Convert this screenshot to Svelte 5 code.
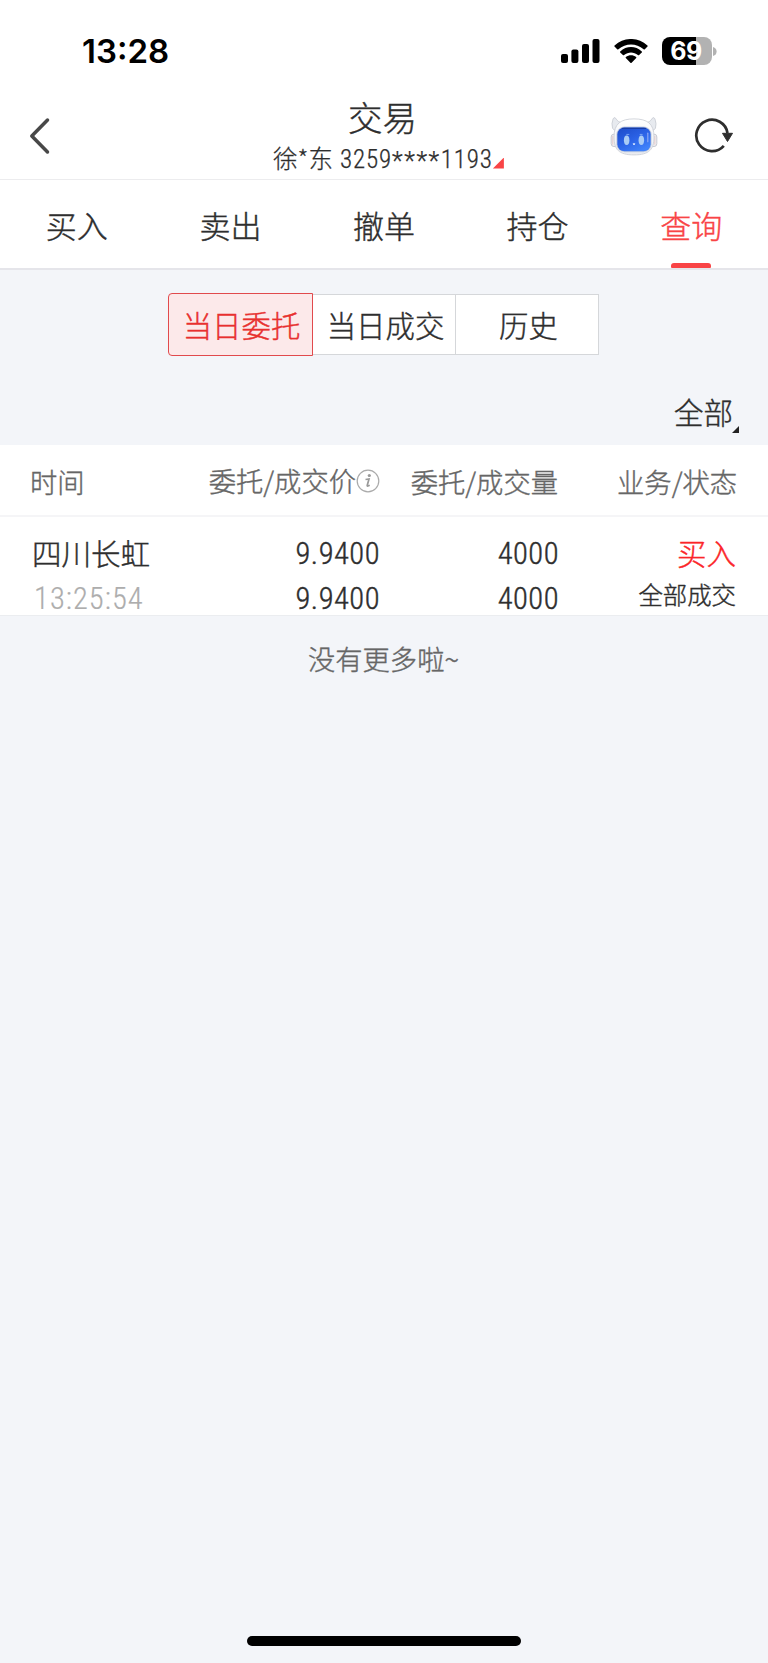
<script>
  const tabs = ['买入', '卖出', '撤单', '持仓', '查询'];
  const segments = ['当日委托', '当日成交', '历史'];
  let tab = $state(4);
  let segment = $state(0);
  const orders = [
    { name: '四川长虹', time: '13:25:54', price: '9.9400', filledPrice: '9.9400', qty: '4000', filledQty: '4000', side: '买入', status: '全部成交' }
  ];
</script>

<div class="screen">
  <div class="status-bar">
    <span class="clock">13:28</span>
    <div class="indicators">
      <svg class="signal" width="39" height="25" viewBox="0 0 39 25">
        <rect x="0" y="15" width="7" height="9" rx="2" />
        <rect x="10.4" y="10.4" width="7" height="13.6" rx="2" />
        <rect x="21" y="5" width="7" height="19" rx="2" />
        <rect x="31.5" y="0" width="7" height="24" rx="2" />
      </svg>
      <svg class="wifi" width="34" height="25" viewBox="0 0 34 25">
        <path d="M.5 7.6Q0 7 .6 6.5C10-2.2 24-2.2 33.400 6.500Q34 7 33.500 7.600L30.800 10.300Q30.200 10.800 29.600 10.300C22.300 3.900 11.700 3.900 4.400 10.300Q3.800 10.800 3.200 10.300Z" />
        <path d="M6.200 13.400Q5.700 12.900 6.200 12.400C12.400 6.600 21.600 6.600 27.800 12.400Q28.300 12.900 27.800 13.400L25.100 16.100Q24.500 16.600 23.900 16.100C19.800 12.700 14.200 12.700 10.100 16.100Q9.500 16.600 8.900 16.100Z" />
        <path d="M11.800 19Q11.300 18.500 11.900 18C14.800 15.700 19.200 15.700 22.100 18Q22.700 18.500 22.200 19L17.600 23.700Q17 24.200 16.400 23.700Z" />
      </svg>
      <div class="battery"><span>69</span></div>
      <svg class="nub" width="4" height="9" viewBox="0 0 4 9"><path d="M0 0Q3.600 1 3.600 4.500T0 9Z" /></svg>
    </div>
  </div>

  <header>
    <svg class="back" width="22" height="38" viewBox="0 0 22 38"><path d="M18.500 3L2.800 19L18.500 35" /></svg>
    <div class="heading">
      <h1>交易</h1>
      <div class="account"><span>徐*东</span><span class="num">3259<b>****</b>1193</span><i></i></div>
    </div>
    <div class="actions">
      <svg class="robot" width="48" height="40" viewBox="0 0 50 42">
        <defs>
          <linearGradient id="face" x1="0" y1="0" x2="0.700" y2="1">
            <stop offset="0" stop-color="#1d4bc8" /><stop offset="0.550" stop-color="#2b62e6" /><stop offset="1" stop-color="#3f82fa" />
          </linearGradient>
          <linearGradient id="shell" x1="0" y1="0" x2="0" y2="1">
            <stop offset="0" stop-color="#ffffff" /><stop offset="1" stop-color="#e9ebf0" />
          </linearGradient>
        </defs>
        <path d="M3 2Q1 7 2.500 12L7 16L14 6Q8 6 6 1.500Q4-.5 3 2ZM47 2Q49 7 47.500 12L43 16L36 6Q42 6 44 1.500Q46-.5 47 2Z" fill="#e7eaef" stroke="#c4c8d0" stroke-width=".8" />
        <rect x="1" y="18" width="8" height="13" rx="3" fill="#f0f0f3" stroke="#c0c2ca" stroke-width=".9" />
        <rect x="41" y="18" width="8" height="13" rx="3" fill="#f0f0f3" stroke="#c0c2ca" stroke-width=".9" />
        <path d="M2.700 20V29M46.900 20V29" stroke="#e5c8c8" stroke-width="1" />
        <path d="M25 2C39 2 46 7 46 21C46 34 41 39.800 25 39.800S4 34 4 21C4 7 11 2 25 2Z" fill="url(#shell)" stroke="#cccfd6" stroke-width=".9" />
        <rect x="6.500" y="10" width="37" height="27" rx="8.500" fill="#c6cede" />
        <rect x="7.500" y="11" width="35" height="25" rx="7.500" fill="url(#face)" />
        <path d="M13 12H37" stroke="#173ca5" stroke-width="1.200" stroke-linecap="round" />
        <path d="M39.500 17V26" stroke="#90a8f2" stroke-width="1.200" stroke-linecap="round" />
        <ellipse cx="17.300" cy="24.500" rx="2.900" ry="5" fill="#a9cbf5" />
        <ellipse cx="32.700" cy="24.500" rx="2.900" ry="5" fill="#a9cbf5" />
        <path d="M17 18.300H20M31 18.300H34" stroke="#7ba5f2" stroke-width="1" />
        <path d="M24.200 28H25.800L25 29.400Z" fill="#d6e5ff" stroke="#d6e5ff" />
      </svg>
      <svg class="refresh" width="40" height="38" viewBox="0 0 40 38">
        <path d="M29.800 28.800A15.700 15.700 0 1 1 33.500 16" fill="none" stroke="#2e2e2e" stroke-width="2.700" />
        <path d="M28.500 16.300H38.500L33.500 24.500Z" fill="#2e2e2e" stroke="#2e2e2e" stroke-linejoin="round" />
      </svg>
    </div>
  </header>

  <nav>
    {#each tabs as label, i}
      <button class:active={tab === i} onclick={() => (tab = i)}>{label}</button>
    {/each}
  </nav>

  <div class="segments">
    {#each segments as label, i}
      <button class:active={segment === i} onclick={() => (segment = i)}>{label}</button>
    {/each}
  </div>

  <div class="filter"><span>全部</span><i></i></div>

  <div class="row table-head">
    <span>时间</span>
    <span class="price-head">委托/成交价<svg width="24" height="24" viewBox="0 0 24 24">
        <circle cx="12" cy="12" r="10.800" fill="none" stroke="#aaa" stroke-width="1.200" />
        <circle cx="13.300" cy="6.500" r="1.600" fill="#999" />
        <path d="M9.500 10.500L13 10L11.200 16.500Q11 17.700 13.700 16.300" fill="none" stroke="#999" stroke-width="1.700" />
      </svg></span>
    <span class="qty-head">委托/成交量</span>
    <span>业务/状态</span>
  </div>

  {#each orders as o}
    <div class="row order">
      <div><span class="name">{o.name}</span><span class="num time">{o.time}</span></div>
      <div><span class="num">{o.price}</span><span class="num">{o.filledPrice}</span></div>
      <div><span class="num">{o.qty}</span><span class="num">{o.filledQty}</span></div>
      <div><span class="side">{o.side}</span><span class="state">{o.status}</span></div>
    </div>
  {/each}

  <p class="end">没有更多啦~</p>
  <div class="home"></div>
</div>

<style>
  :global(body) { margin: 0; background: #f3f5f9; }
  .screen {
    width: 768px; height: 1663px; display: flex; flex-direction: column;
    background: #f3f5f9; color: #2e2e2e; overflow: hidden;
    font-family: "Noto Sans CJK SC", sans-serif; font-weight: 300;
    -webkit-text-stroke: 0.4px currentColor;
  }
  .screen * { box-sizing: border-box; }
  button { border: 0; margin: 0; padding: 0; background: none; font: inherit; color: inherit; }
  .num { font-family: Roboto, sans-serif; font-weight: 300; font-stretch: 85%; }

  .status-bar { height: 90px; flex: none; background: #fff; display: flex; justify-content: space-between; padding: 37px 51px 0 82px; -webkit-text-stroke: 0; }
  .clock { font: 600 33px/29px Inter, sans-serif; color: #000; }
  .indicators { display: flex; align-items: flex-start; }
  .signal { margin-top: 2px; }
  .wifi { margin: 2px 0 0 14px; }
  .battery {
    width: 50px; height: 28px; margin-left: 14px; border-radius: 8px;
    background: linear-gradient(90deg, #000 69%, #b2b2b2 69%);
    display: flex; justify-content: center; padding-right: 2px; color: #fff; font: 700 25px/29px Inter, sans-serif; letter-spacing: -.5px;
  }
  .nub { margin: 10px 0 0 1px; fill: #b2b2b2; }

  header { height: 90px; flex: none; background: #fff; border-bottom: 1px solid #ececee; display: grid; grid-template-columns: 200px 1fr 200px; }
  .back { margin: 27px 0 0 29px; fill: none; stroke: #484848; stroke-width: 3.500; stroke-linecap: round; stroke-linejoin: round; }
  .heading { display: flex; flex-direction: column; align-items: center; }
  h1 { margin: 6px 3px 0 0; font-size: 34.500px; line-height: 40px; font-weight: 300; }
  .account { display: flex; align-items: center; height: 44px; font-size: 24.500px; line-height: 44px; padding-left: 9px; -webkit-text-stroke-width: .25px; }
  .account .num { font-size: 25px; margin-left: 7px; letter-spacing: .85px; padding-top: 3px; }
  .account b { font-weight: 300; letter-spacing: 1.600px; vertical-align: -2px; line-height: 1; }
  .account span:first-child { padding-top: 0; }
  .account i { width: 11px; height: 11px; margin-top: 10px; background: #f94446; clip-path: polygon(100% 0, 100% 100%, 0 100%); }
  .actions { display: flex; padding-left: 42px; }
  .robot { margin-top: 27px; }
  .refresh { margin: 27px 0 0 36px; }

  nav { height: 90px; flex: none; background: #fff; border-bottom: 2px solid #e5e5ea; display: grid; grid-template-columns: repeat(5, 1fr); }
  nav button { display: flex; flex-direction: column; align-items: center; justify-content: space-between; font-size: 31px; line-height: 40px; padding-top: 25px; }
  nav .active { color: #f94446; }
  nav .active::after { content: ""; width: 40px; height: 5px; border-radius: 3px 3px 1px 1px; background: #f94446; }

  .segments { height: 62px; flex: none; width: 431px; margin: 23px auto 0 168px; display: grid; grid-template-columns: 145px 143px 143px; font-size: 29.400px; }
  .segments button { background: #fff; border: 1px solid #d5d7da; border-left: 0; line-height: 59px; margin: 1px 0; padding-left: 3px; }
  .segments .active { background: #fce9ea; color: #e8302f; border: 1px solid #e14a4d; border-radius: 4px 0 0 4px; margin: 0; padding: 0 0 0 2px; line-height: 61px; }

  .filter { height: 90px; flex: none; display: flex; justify-content: flex-end; padding: 36px 29px 0 0; font-size: 29.500px; line-height: 40px; }
  .filter span { margin-right: -1px; }
  .filter i { width: 7px; height: 7px; margin-top: 35px; background: #222; clip-path: polygon(100% 0, 100% 100%, 0 100%); }

  .row { display: grid; grid-template-columns: 170px 180px 179px 178px; padding-left: 30px; background: #fff; text-align: right; flex: none; }
  .row > :first-child { text-align: left; }
  .table-head { height: 72px; border-bottom: 2px solid #f5f5f7; color: #666; font-size: 27.300px; line-height: 72px; }
  .price-head { display: flex; justify-content: flex-end; white-space: nowrap; line-height: 70px; }
  .price-head svg { margin-top: 24px; }
  .qty-head { padding-right: 1px; }
  .order { height: 99px; border-bottom: 1px solid #ebedf0; }
  .order > div { display: flex; flex-direction: column; }
  .order span { line-height: 44px; height: 44px; }
  .order > div > :first-child { margin-top: 15px; }
  .order .num { font-size: 30.500px; letter-spacing: .5px; }
  .order .num:last-child { line-height: 46px; }
  .order .time { color: #adadad; letter-spacing: 1.050px; padding-left: 4px; -webkit-text-stroke: 0.2px currentColor; }
  .name, .side { font-size: 29.500px; }
  .order .name, .order .side { line-height: 40px; }
  .name { padding-left: 2px; }
  .side { color: #fb2529; }
  .side, .state { padding-right: 1px; }
  .order .state { font-size: 24.400px; line-height: 36px; }
  .end { margin: 22px 1px 0 0; text-align: center; color: #666; font-size: 27.300px; line-height: 40px; }
  .home { width: 274px; height: 10px; border-radius: 5px; background: #000; margin: auto auto 17px; }
</style>
